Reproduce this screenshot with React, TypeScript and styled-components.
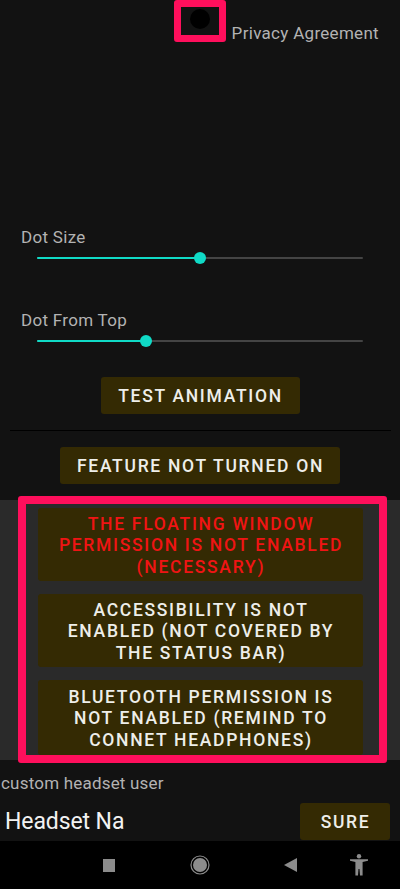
import React from "react";
import styled, { createGlobalStyle } from "styled-components";

const Global = createGlobalStyle`
  html, body { margin: 0; padding: 0; background: #121212; }
  * { box-sizing: border-box; }
`;

const Screen = styled.div`
  width: 400px;
  height: 889px;
  display: flex;
  flex-direction: column;
  background: #121212;
  font-family: Roboto, "Liberation Sans", sans-serif;
  overflow: hidden;
`;

const Content = styled.main`
  height: 841px;
  display: flex;
  flex-direction: column;
`;

const TopRow = styled.div`
  height: 42px;
  display: flex;
  justify-content: flex-end;
  align-items: flex-end;
  padding-right: 21px;
  gap: 6px;
`;

const DotFrame = styled.div`
  width: 52px;
  height: 42px;
  border: 7px solid #ff0f5c;
  border-radius: 3px;
  display: flex;
  justify-content: center;
  padding-top: 2px;
`;

const Dot = styled.div`
  width: 20px;
  height: 20px;
  border-radius: 50%;
  background: #000;
`;

const PrivacyLink = styled.span`
  color: #b3b3b3;
  font-size: 17px;
  line-height: 19px;
  letter-spacing: 0.3px;
  margin-bottom: -1px;
`;

const Sliders = styled.section`
  margin-top: 186px;
  display: flex;
  flex-direction: column;
  gap: 52px;
`;

const SliderBlock = styled.div`
  padding-left: 21px;
`;

const SliderLabel = styled.div`
  color: #b3b3b3;
  font-size: 17px;
  line-height: 19px;
  letter-spacing: 0.3px;
`;

const Track = styled.div`
  position: relative;
  width: 326px;
  height: 2px;
  margin: 10px 0 0 16px;
  background: #444;
  border-radius: 1px;
`;

const TrackFill = styled.div`
  height: 100%;
  background: #10dac6;
  border-radius: 1px;
`;

const Thumb = styled.div`
  position: absolute;
  top: -5px;
  width: 12px;
  height: 12px;
  margin-left: -6px;
  border-radius: 50%;
  background: #10dac6;
`;

const Center = styled.div<{ $top: number }>`
  display: flex;
  justify-content: center;
  margin-top: ${(p) => p.$top}px;
`;

const ActionButton = styled.button<{ $width?: number; $height?: number; $alert?: boolean }>`
  width: ${(p) => (p.$width ? `${p.$width}px` : "100%")};
  height: ${(p) => p.$height ?? 37}px;
  flex: none;
  border: 0;
  border-radius: 3px;
  padding: 3px 10px 0 11px;
  background: #342a03;
  color: ${(p) => (p.$alert ? "#f01414" : "#eeeeea")};
  font-family: Roboto, "Liberation Sans", sans-serif;
  font-size: 17.5px;
  font-weight: 500;
  line-height: 21.5px;
  letter-spacing: 1.7px;
  text-align: center;
  text-transform: uppercase;
`;

const Divider = styled.hr`
  height: 1px;
  margin: 16px 9px 0 10px;
  border: 0;
  background: #000;
`;

const PermissionPanel = styled.section`
  position: relative;
  height: 260px;
  margin-top: 16px;
  background: #2a2a2a;
  padding: 8px 37px 0 38px;
  display: flex;
  flex-direction: column;
  gap: 13px;
`;

const PanelFrame = styled.div`
  position: absolute;
  left: 18px;
  top: -4px;
  width: 369px;
  height: 267px;
  border: 8px solid #ff0f5c;
  border-radius: 3px;
  pointer-events: none;
`;

const HeadsetLabel = styled.div`
  margin: 14px 0 0 1px;
  color: #b3b3b3;
  font-size: 17px;
  line-height: 19px;
  letter-spacing: 0.2px;
`;

const HeadsetRow = styled.div`
  display: flex;
  justify-content: space-between;
  align-items: center;
  margin-top: 10px;
  padding: 0 10px 0 5px;
`;

const HeadsetName = styled.span`
  color: #f2f2f2;
  font-size: 23px;
  line-height: 37px;
  letter-spacing: -0.1px;
`;

const NavBar = styled.nav`
  height: 48px;
  background: #000;
  position: relative;
  display: flex;
  align-items: center;
  padding-left: 103px;
`;

const NavIcon = styled.svg<{ $gap: number }>`
  flex: none;
  margin-left: ${(p) => p.$gap}px;
  fill: #8c8c8c;
`;

const Slider = ({ label, pct }: { label: string; pct: number }) => (
  <SliderBlock>
    <SliderLabel>{label}</SliderLabel>
    <Track>
      <TrackFill style={{ width: `${pct}%` }} />
      <Thumb style={{ left: `${pct}%` }} />
    </Track>
  </SliderBlock>
);

export default function App() {
  return (
    <Screen>
      <Global />
      <Content>
        <TopRow>
          <DotFrame>
            <Dot />
          </DotFrame>
          <PrivacyLink>Privacy Agreement</PrivacyLink>
        </TopRow>
        <Sliders>
          <Slider label="Dot Size" pct={50} />
          <Slider label="Dot From Top" pct={33.4} />
        </Sliders>
        <Center $top={35}>
          <ActionButton $width={199}>Test Animation</ActionButton>
        </Center>
        <Divider />
        <Center $top={16}>
          <ActionButton $width={280}>Feature not turned on</ActionButton>
        </Center>
        <PermissionPanel>
          <ActionButton $height={73} $alert>
            The floating window permission is not enabled (necessary)
          </ActionButton>
          <ActionButton $height={73}>
            Accessibility is not enabled (not covered by the status bar)
          </ActionButton>
          <ActionButton $height={75}>
            Bluetooth permission is not enabled (remind to connet headphones)
          </ActionButton>
          <PanelFrame />
        </PermissionPanel>
        <HeadsetLabel>custom headset user</HeadsetLabel>
        <HeadsetRow>
          <HeadsetName>Headset Na</HeadsetName>
          <ActionButton $width={90}>Sure</ActionButton>
        </HeadsetRow>
      </Content>
      <NavBar>
        <NavIcon $gap={0} width="12" height="13" viewBox="0 0 12 13">
          <rect width="12" height="13" />
        </NavIcon>
        <NavIcon $gap={75} width="20" height="20" viewBox="0 0 20 20">
          <circle cx="10" cy="10" r="9" fill="none" stroke="#8c8c8c" strokeWidth="1.2" />
          <circle cx="10" cy="10" r="7" />
        </NavIcon>
        <NavIcon $gap={74} width="13" height="14" viewBox="0 0 13 14">
          <path d="M13 0v14L0 7z" />
        </NavIcon>
        <NavIcon $gap={53} width="18" height="22" viewBox="0 0 18 22">
          <circle cx="9" cy="2.2" r="2.2" />
          <path d="M0 5.2 L18 5.2 L18 6.8 L12.6 8 L12.6 21.5 L10 21.5 L9.5 15 L8.5 15 L8 21.5 L5.4 21.5 L5.4 8 L0 6.8 Z" />
        </NavIcon>
      </NavBar>
    </Screen>
  );
}
